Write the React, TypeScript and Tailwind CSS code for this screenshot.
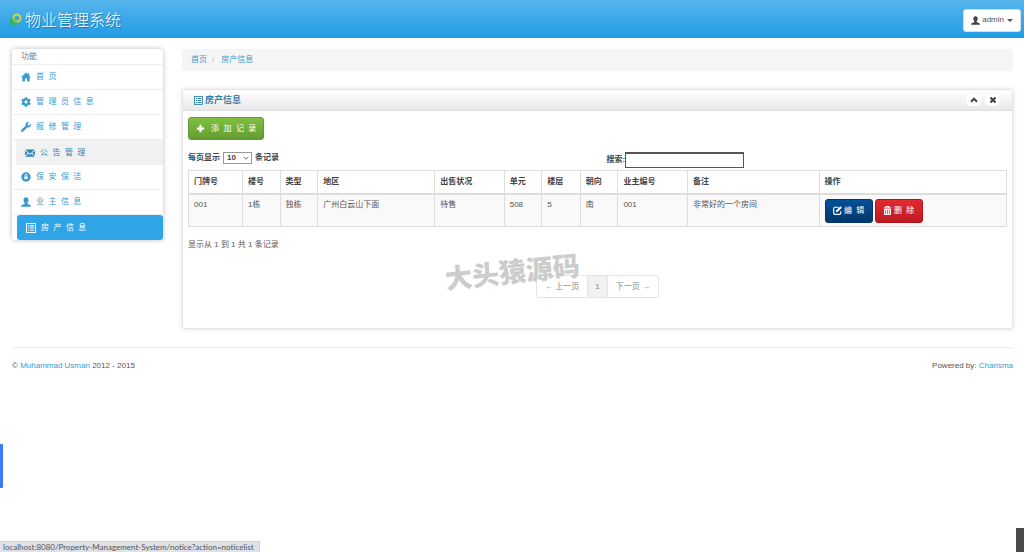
import { useState } from 'react';
import { FaCog, FaWrench } from 'react-icons/fa';

type IconProps = { className?: string };

function HomeIcon({ className }: IconProps) {
  return (
    <svg viewBox="0 0 16 16" fill="currentColor" className={className}>
      <path d="M8 .8l3 3V2h2.200v4L16 8.800h-2.200V15H9.700v-4.500H6.300V15H2.200V8.800H0z" />
    </svg>
  );
}

function PlusIcon({ className }: IconProps) {
  return (
    <svg viewBox="0 0 16 16" fill="currentColor" className={className}>
      <path d="M6 1.500h4V6h4.500v4H10v4.500H6V10H1.500V6H6z" />
    </svg>
  );
}

function ChevronIcon({ className }: IconProps) {
  return (
    <svg viewBox="0 0 16 16" className={className}>
      <path d="M2 11.500l6-6 6 6" fill="none" stroke="currentColor" strokeWidth="4" />
    </svg>
  );
}

function CloseIcon({ className }: IconProps) {
  return (
    <svg viewBox="0 0 16 16" className={className}>
      <path d="M3 3l10 10M13 3L3 13" fill="none" stroke="currentColor" strokeWidth="4.500" />
    </svg>
  );
}

function UserIcon({ className }: IconProps) {
  return (
    <svg viewBox="0 0 16 16" fill="currentColor" className={className}>
      <path d="M8 .3C5.500.3 4 2 4 4.600c0 2 .8 3.800 2 4.900v1.300c-.5.800-4.600 1.500-5.300 2.600-.4.600-.5 1.300-.5 2.200h15.600c0-.9-.1-1.600-.5-2.200-.7-1.100-4.800-1.800-5.300-2.600V9.500c1.200-1.100 2-2.900 2-4.900C12 2 10.500.3 8 .3z" />
    </svg>
  );
}

function ListIcon({ className }: IconProps) {
  return (
    <svg viewBox="0 0 16 16" className={className}>
      <rect x="0.8" y="0.8" width="14.4" height="14.4" fill="none" stroke="currentColor" strokeWidth="1.5" />
      <path
        d="M3.200 4.500h2M6.500 4.500h6.500M3.200 8h2M6.500 8h6.500M3.200 11.500h2M6.500 11.500h6.500"
        stroke="currentColor"
        strokeWidth="1.800"
      />
    </svg>
  );
}

function EnvelopeIcon({ className }: IconProps) {
  return (
    <svg viewBox="0 0 16 16" fill="currentColor" className={className}>
      <path d="M.5 2.500h15L8 9zM0 4l4.500 4L0 12.300zM16 4l-4.500 4L16 12.300zM5.500 8.900L8 11l2.500-2.100 5 4.900H.5z" />
    </svg>
  );
}

function LockIcon({ className }: IconProps) {
  return (
    <svg viewBox="0 0 16 16" className={className}>
      <circle cx="8" cy="8" r="7.500" fill="currentColor" />
      <path d="M6.300 7V5.200a1.700 1.700 0 0 1 3.400 0V7" fill="none" stroke="white" strokeWidth="1.300" />
      <rect x="5.500" y="7" width="5" height="4.500" fill="white" />
    </svg>
  );
}

function EditIcon({ className }: IconProps) {
  return (
    <svg viewBox="0 0 16 16" className={className}>
      <path
        d="M10 2.200H3.500A2.300 2.300 0 0 0 1.200 4.500v8a2.300 2.300 0 0 0 2.300 2.300h8a2.300 2.300 0 0 0 2.300-2.300V9.500"
        fill="none"
        stroke="currentColor"
        strokeWidth="2"
      />
      <path d="M13.200.5l2.500 2.500-7.200 7.200-3.500 1 1-3.500z" fill="currentColor" />
    </svg>
  );
}

function TrashIcon({ className }: IconProps) {
  return (
    <svg viewBox="0 0 16 16" className={className}>
      <path d="M5.500 2.500V1h5v1.500M1 3.500h14" fill="none" stroke="currentColor" strokeWidth="1.800" />
      <path
        fillRule="evenodd"
        fill="currentColor"
        d="M2 5.500h12V16H2zM4.300 7v7.500h1.200V7zM7.400 7v7.500h1.200V7zM10.500 7v7.500h1.200V7z"
      />
    </svg>
  );
}

function LogoIcon({ className }: IconProps) {
  return (
    <svg viewBox="0 0 26 26" fill="none" className={className}>
      <circle cx="9" cy="17" r="6.500" fill="#2fb36a" stroke="#2fb36a" strokeWidth="4" />
      <circle cx="16" cy="10" r="7" fill="#3fa6dd" stroke="#c9d94a" strokeWidth="4" />
      <path d="M9 10a7 7 0 0 0 7 7" stroke="#7cc653" strokeWidth="4" />
    </svg>
  );
}

// labels are set wide, two spaces between the characters
const wide = (label: string) => [...label].join('\u00a0\u00a0');

const MENU = [
  { label: '首页', icon: HomeIcon },
  { label: '管理员信息', icon: FaCog },
  { label: '报修管理', icon: FaWrench },
  { label: '公告管理', icon: EnvelopeIcon, state: 'hover' },
  { label: '保安保洁', icon: LockIcon },
  { label: '业主信息', icon: UserIcon },
  { label: '房产信息', icon: ListIcon, state: 'active' },
];

const COLUMNS = [
  { title: '门牌号', width: 'w-[6.6%]' },
  { title: '楼号', width: 'w-[4.6%]' },
  { title: '类型', width: 'w-[4.6%]' },
  { title: '地区', width: 'w-[14.3%]' },
  { title: '出售状况', width: 'w-[8.5%]' },
  { title: '单元', width: 'w-[4.6%]' },
  { title: '楼层', width: 'w-[4.7%]' },
  { title: '朝向', width: 'w-[4.6%]' },
  { title: '业主编号', width: 'w-[8.5%]' },
  { title: '备注', width: 'w-[16.1%]' },
  { title: '操作', width: 'w-[22.9%]' },
];

const ROWS = [['001', '1栋', '独栋', '广州白云山下面', '待售', '508', '5', '南', '001', '非常好的一个房间']];

function menuClass(state?: string) {
  if (state === 'active') return 'ml-[5px] rounded-[3px] bg-[#2fa4e7] text-white';
  if (state === 'hover') return 'ml-1 bg-[#f1f1f1] text-[#2f86b8]';
  return 'border-b border-[#eeeeee] text-[#3a9ad0]';
}

function Sidebar() {
  return (
    <nav className="w-[151px] shrink-0 self-start rounded-[3px] bg-white shadow-[0_0_5px_#bbbbbb]">
      <div className="h-4 border-b border-[#eeeeee] pl-[9px] leading-4 text-[#777777]">功能</div>
      <ul>
        {MENU.map(({ label, icon: Icon, state }) => (
          <li key={label}>
            <a href="#" className={`flex h-[25px] items-center gap-[5px] pl-[9px] ${menuClass(state)}`}>
              <Icon className="size-[10px]" />
              <span>{wide(label)}</span>
            </a>
          </li>
        ))}
      </ul>
    </nav>
  );
}

function EstateTable() {
  return (
    <table className="w-full table-fixed border-collapse border border-[#dddddd] text-left">
      <thead>
        <tr className="h-[23px] border-b-2 border-[#dddddd]">
          {COLUMNS.map((c) => (
            <th key={c.title} className={`border-x border-[#dddddd] px-[5px] font-bold text-[#444444] ${c.width}`}>
              {c.title}
            </th>
          ))}
        </tr>
      </thead>
      <tbody>
        {ROWS.map((row) => (
          <tr key={row[0]} className="h-[33px] bg-[#f9f9f9] align-top">
            {row.map((cell, i) => (
              <td key={i} className="border-x border-[#dddddd] px-[5px] pt-1">
                {cell}
              </td>
            ))}
            <td className="px-[5px] pt-1">
              <div className="flex gap-[2px] text-white">
                <button className="flex h-6 w-12 items-center justify-center gap-[2px] rounded-[3px] border border-[#02366c] bg-linear-to-b from-[#04519b] to-[#033769]">
                  <EditIcon className="size-[9px]" />
                  {wide('编辑')}
                </button>
                <button className="flex h-6 w-12 items-center justify-center gap-[2px] rounded-[3px] border border-[#b5121b] bg-linear-to-b from-[#e12b31] to-[#bd1a22]">
                  <TrashIcon className="size-[9px]" />
                  {wide('删除')}
                </button>
              </div>
            </td>
          </tr>
        ))}
      </tbody>
    </table>
  );
}

export default function App() {
  const [pageSize, setPageSize] = useState('10');
  const [search, setSearch] = useState('');

  return (
    <div className="min-h-screen bg-white font-['Liberation_Sans','Noto_Sans_CJK_SC',sans-serif] text-[8px] leading-3 text-[#555555]">
      <header className="flex h-[38px] items-center justify-between bg-linear-to-b from-[#54b4eb] to-[#1d9ce5] pr-[3px] pl-[9px]">
        <a
          href="#"
          className="flex items-center gap-[3px] font-['Noto_Sans_CJK_SC',sans-serif] text-[16px] font-light text-white text-shadow-[1px_1px_1px_#1b6fa5]"
        >
          <LogoIcon className="size-[13px]" />
          物业管理系统
        </a>
        <button className="mt-[2px] flex h-[23px] items-center gap-[2px] rounded-[3px] border border-[#dddddd] bg-white px-[7px]">
          <UserIcon className="size-[9px] text-[#444444]" />
          admin
          <span className="ml-px border-x-[3px] border-t-[3px] border-x-transparent border-t-[#555555]" />
        </button>
      </header>

      <div className="flex gap-[19px] pt-[11px] pr-[11px] pl-3">
        <Sidebar />

        <main className="min-w-0 flex-1">
          <nav className="flex h-[22px] items-center gap-[5px] rounded-[2px] bg-[#f5f5f5] px-[9px]">
            <a href="#" className="text-[#3a9ad0]">首页</a>
            <span className="text-[#bbbbbb]">/</span>
            <a href="#" className="ml-[2px] text-[#3a9ad0]">房产信息</a>
          </nav>

          <section className="mt-[18px] rounded-[3px] border border-[#e4e4e4] bg-white shadow-[0_0_5px_#dddddd]">
            <div className="flex h-[21px] items-center justify-between border-b border-[#dedede] bg-linear-to-b from-white to-[#e9e9e9] pr-3 pl-[11px]">
              <h2 className="flex items-center gap-[2px] text-[9px] font-bold text-[#317eac]">
                <ListIcon className="size-[9px]" />
                房产信息
              </h2>
              <div className="flex gap-1 text-[#444444]">
                <button aria-label="收起" className="flex h-3 w-[15px] items-center justify-center rounded-full bg-white">
                  <ChevronIcon className="size-[8px]" />
                </button>
                <button aria-label="关闭" className="flex h-3 w-[15px] items-center justify-center rounded-full bg-white">
                  <CloseIcon className="size-[8px]" />
                </button>
              </div>
            </div>

            <div className="px-[5px] pt-[6px] pb-[30px]">
              <button className="flex h-[23px] items-center gap-[6px] rounded-[3px] border border-[#61973a] bg-linear-to-b from-[#80bf40] to-[#649e32] px-[7px] text-white">
                <PlusIcon className="size-[9px]" />
                {wide('添加记录')}
              </button>

              <div className="mt-3 mb-[2px] grid grid-cols-2 font-bold text-[#444444]">
                <label className="flex h-3 items-center gap-[2px]">
                  每页显示
                  <span className="relative mx-px">
                    <select
                      value={pageSize}
                      onChange={(e) => setPageSize(e.target.value)}
                      className="block h-3 w-[29px] appearance-none border border-[#999999] bg-white pl-[3px] text-[8px] leading-[10px]"
                    >
                      <option>10</option>
                      <option>25</option>
                      <option>50</option>
                    </select>
                    <svg viewBox="0 0 10 6" className="pointer-events-none absolute top-1 right-[3px] h-1 w-[6px]">
                      <path d="M1 1l4 4 4-4" fill="none" stroke="#555555" strokeWidth="1.500" />
                    </svg>
                  </span>
                  条记录
                </label>
                <label className="flex items-center pl-[9px]">
                  搜索:
                  <input
                    type="text"
                    value={search}
                    onChange={(e) => setSearch(e.target.value)}
                    className="h-4 w-[119px] border border-t-2 border-[#555555] px-1 font-normal"
                  />
                </label>
              </div>

              <EstateTable />

              <p className="mt-3">显示从 1 到 1 共 1 条记录</p>

              <div className="relative mt-6 flex justify-center">
                <ul className="flex rounded-[3px] border border-[#e4e4e4] leading-[21px] text-[#888888]">
                  <li>
                    <a href="#" className="block px-2">← 上一页</a>
                  </li>
                  <li>
                    <a href="#" className="block border-x border-[#e4e4e4] bg-[#f1f1f1] px-[7px]">1</a>
                  </li>
                  <li>
                    <a href="#" className="block px-2">下一页 →</a>
                  </li>
                </ul>
                <div className="pointer-events-none absolute -top-4 right-1/2 mr-[18px] -rotate-6 text-[27px] leading-7 font-black whitespace-nowrap text-[#cccccc]">
                  大头猿源码
                </div>
              </div>
            </div>
          </section>
        </main>
      </div>

      <footer className="mt-[18px] mr-[11px] ml-3 flex justify-between border-t border-[#eeeeee] pt-3">
        <p>
          © <a href="#" className="text-[#3a9ad0]">Muhammad Usman</a> 2012 - 2015
        </p>
        <p>
          Powered by: <a href="#" className="text-[#3a9ad0]">Charisma</a>
        </p>
      </footer>

      {/* edge handle, link preview and corner widget stay over the page */}
      <div className="fixed bottom-16 left-0 h-11 w-[3px] rounded-r-[1px] bg-[#3d7bfb]" />
      <div className="fixed bottom-0 left-0 h-[11px] border-t border-r border-[#d0d3d8] bg-[#dee1e6] pr-[5px] pl-[3px] font-['Lato',sans-serif] text-[8px] leading-[10px]">
        localhost:8080/Property-Management-System/notice?action=noticelist
      </div>
      <div className="fixed right-0 bottom-0 h-6 w-2 bg-[#4a4a4a]" />
    </div>
  );
}
